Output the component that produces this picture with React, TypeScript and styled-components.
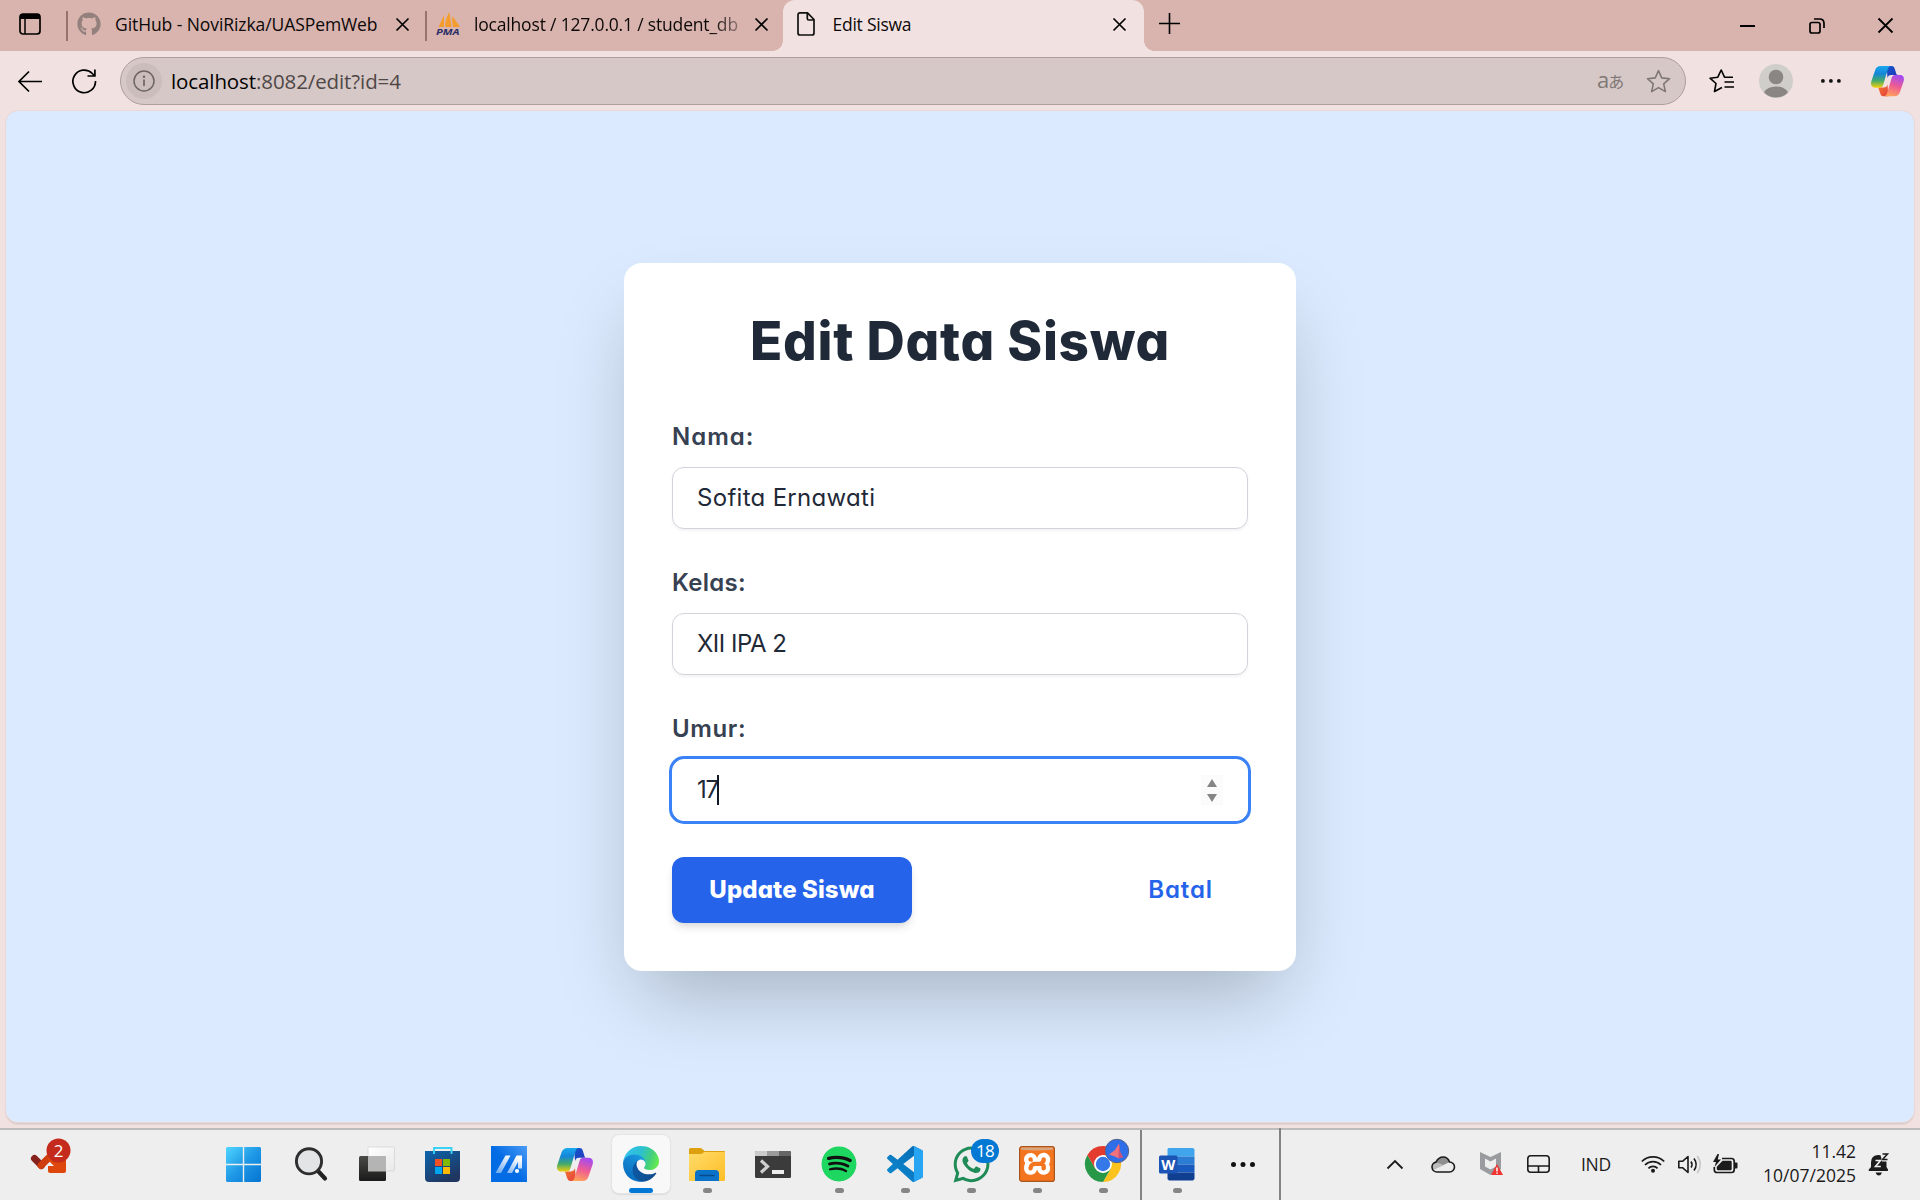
import React from "react";
import styled, { createGlobalStyle, css } from "styled-components";
import { FaGithub, FaSpotify, FaWhatsapp } from "react-icons/fa";
import { SiXampp } from "react-icons/si";

const SYSTEM = `"Open Sans", "Noto Sans", sans-serif`;
const BRAND = `Inter, "Open Sans", sans-serif`;

const GlobalStyle = createGlobalStyle`
  *, *::before, *::after { box-sizing: border-box; }
  html, body { margin: 0; padding: 0; }
  body { width: 1920px; height: 1200px; overflow: hidden; background: #f1e2e0; font-family: ${SYSTEM}; }
  svg { display: block; flex: none; overflow: visible; }
`;

/* ---------- window ---------- */
const Screen = styled.div`
  width: 1920px; height: 1200px; display: flex; flex-direction: column; background: #f1e2e1;
`;
const TabStrip = styled.div`
  height: 51px; flex: none; display: flex; align-items: stretch; background: #d9b4ae; color: #0c0808;
`;
const TabActions = styled.div`
  width: 66px; display: flex; align-items: center; padding: 0 0 3px 19px;
`;
const TabDivider = styled.div`
  width: 2px; height: 30px; margin-top: 11px; background: #97736f;
`;
const Tab = styled.div<{ $width: number; $pad: number; $end: number; $active?: boolean }>`
  width: ${(p) => p.$width}px; flex: none; display: flex; align-items: center;
  padding: 0 ${(p) => p.$end}px 3px ${(p) => p.$pad}px;
  ${(p) => p.$active && css`
    position: relative; background: #f1e2e1; border-radius: 12px 12px 0 0;
    &::before, &::after { content: ""; position: absolute; bottom: 0; width: 10px; height: 10px; }
    &::before { left: -10px; background: radial-gradient(circle at 0 0, transparent 9.5px, #f1e2e1 10px); }
    &::after { right: -10px; background: radial-gradient(circle at 100% 0, transparent 9.5px, #f1e2e1 10px); }
  `}
`;
const TabTitle = styled.span<{ $ls: number; $fade?: boolean }>`
  flex: 1; min-width: 0; margin-right: 13px; white-space: nowrap;
  font-size: 17.5px; line-height: 24px; letter-spacing: ${(p) => p.$ls}px; padding-bottom: 1px;
  ${(p) => p.$fade && css`mask-image: linear-gradient(to right, #000 89%, transparent 104%);`}
`;
const FavIcon = styled.span<{ $gap: number }>`
  display: flex; width: 24px; flex: none; margin-right: ${(p) => p.$gap}px;
`;
const NewTab = styled.div`
  width: 51px; display: flex; align-items: center; justify-content: center; padding-bottom: 4px;
`;
const Grow = styled.div`flex: 1;`;
const WindowButton = styled.div`
  width: 69px; display: flex; align-items: center; justify-content: center;
`;

const Toolbar = styled.div`
  height: 60px; flex: none; display: flex; align-items: center; padding-right: 5px;
`;
const ToolSlot = styled.div<{ $width: number; $shift?: number }>`
  width: ${(p) => p.$width}px; flex: none; display: flex; align-items: center; justify-content: center;
  padding-right: ${(p) => p.$shift ?? 0}px;
`;
const AddressBar = styled.div`
  width: 1566px; height: 48px; flex: none; margin-right: 9px; display: flex; align-items: center;
  padding: 0 14px 0 5px; border: 1.5px solid #ad9f9e; border-radius: 24px; background: #d6c8c7;
`;
const SiteInfo = styled.div`
  width: 36px; height: 36px; border-radius: 50%; background: #cbbdbc; display: flex; align-items: center; justify-content: center;
`;
const Url = styled.div`
  margin-left: 9px; flex: 1; font-size: 20.5px; line-height: 30px; letter-spacing: -0.1px; color: #4f4746; padding-bottom: 1px;
  b { font-weight: 400; color: #000; }
`;
const Translate = styled.div`
  width: 30px; margin-right: 19px; display: flex; align-items: baseline; color: #7f7776;
  font-size: 22px; line-height: 28px; padding-bottom: 3px;
  span { font-family: "Noto Sans CJK JP", sans-serif; font-size: 16px; margin-left: -1px; }
`;

/* ---------- page ---------- */
const Viewport = styled.main`
  width: 1908px; height: 1011px; margin: 0 6px 6px; flex: none; border-radius: 12px; background: #dbeafe;
  box-shadow: 0 0 0 1px #ecd8d4, 0 2px 2px #cfbfbf; display: flex; align-items: center; justify-content: center; overflow: hidden;
`;
const Card = styled.form`
  width: 672px; height: 708px; margin: 1px 0 0; padding: 42px 48px 48px; background: #fff; border-radius: 18px;
  box-shadow: 0 37.5px 75px -18px rgba(0, 0, 0, 0.25); font-family: ${BRAND}; font-feature-settings: "cv11";
  display: flex; flex-direction: column;
`;
const Title = styled.h1`
  margin: 0 0 42px; height: 72px; line-height: 72px; font-size: 53px; font-weight: 800; color: #1f2937;
  text-align: center; white-space: nowrap; letter-spacing: 0.7px;
`;
const Field = styled.label`
  display: flex; flex-direction: column; margin-bottom: 36px;
`;
const Caption = styled.span<{ $ls: number }>`
  height: 36px; line-height: 36px; margin-bottom: 12px; font-size: 24px; font-weight: 600; color: #374151;
  letter-spacing: ${(p) => p.$ls}px;
`;
const Control = styled.span<{ $focus?: boolean }>`
  height: 62px; display: flex; align-items: center; padding: 0 24px; border-radius: 12px; background: #fff;
  border: 1.5px solid ${(p) => (p.$focus ? "#fff" : "#d1d5db")};
  box-shadow: ${(p) => (p.$focus ? "0 0 0 3px #3b82f6" : "0 1.5px 3px rgba(0, 0, 0, 0.05)")};
  color: #1f2937;
`;
const Value = styled.span<{ $ls: number }>`
  font-size: 24px; line-height: 36px; letter-spacing: ${(p) => p.$ls}px;
`;
const Caret = styled.span`width: 2px; height: 30px; margin-left: -1px; background: #111827;`;
const Spinner = styled.span`
  width: 22px; height: 30px; margin-left: auto; background: #fbfbfb; display: flex; flex-direction: column;
  align-items: center; justify-content: center; gap: 7px;
`;
const Actions = styled.div`
  display: flex; align-items: center; justify-content: space-between;
`;
const Submit = styled.button`
  width: 240px; height: 66px; padding: 0; border: 0; border-radius: 12px; background: #2563eb; color: #fff;
  font: 800 24px/36px ${BRAND}; font-feature-settings: "cv11"; letter-spacing: 0.1px; white-space: nowrap;
  box-shadow: 0 6px 9px -1.5px rgba(0, 0, 0, 0.1), 0 3px 6px -3px rgba(0, 0, 0, 0.1);
`;
const Cancel = styled.a`
  margin-right: 35px; font-size: 24px; font-weight: 600; line-height: 36px; color: #2563eb; letter-spacing: 0.9px;
`;

/* ---------- taskbar ---------- */
const Taskbar = styled.footer`
  height: 72px; flex: none; display: flex; background: #eeeeee; border-top: 2px solid #bcbcbc; color: #1b1b1b;
`;
const Widgets = styled.div`
  width: 210px; flex: none; padding: 10px 0 0 30px;
`;
const AppSlot = styled.div<{ $width?: number }>`
  width: ${(p) => p.$width ?? 66}px; height: 70px; flex: none; display: flex; flex-direction: column; align-items: center;
`;
const AppTile = styled.div<{ $active?: boolean }>`
  width: 58px; height: 58px; margin-top: 5px; border-radius: 7px; display: flex; align-items: center; justify-content: center;
  position: relative;
  ${(p) => p.$active && css`background: #f8f8f8; box-shadow: 0 0 0 1px #e4e4e4, 0 1px 1px 1px #dcdcdc;`}
`;
const Running = styled.i<{ $active?: boolean }>`
  width: ${(p) => (p.$active ? 24 : 9)}px; height: 5px; margin-top: -5px; border-radius: 3px; z-index: 1;
  background: ${(p) => (p.$active ? "#0078d7" : "#858585")};
`;
const Badge = styled.span`
  position: absolute; top: 4px; right: 1px; width: 28px; height: 24px; border-radius: 12px; background: #0078d4; color: #fff;
  font-size: 17px; line-height: 24px; text-align: center; letter-spacing: -0.7px;
`;
const BarDivider = styled.div<{ $up?: boolean; $before?: number }>`
  width: 2px; flex: none; margin: ${(p) => (p.$up ? -2 : 0)}px 0 0 ${(p) => p.$before ?? 0}px; background: #838383;
`;
const Tray = styled.div`
  display: flex; padding-right: 18px; height: 68px;
`;
const TraySlot = styled.div<{ $width: number }>`
  width: ${(p) => p.$width}px; flex: none; display: flex; align-items: center; justify-content: center;
`;
const Lang = styled.span`font-size: 17.5px; line-height: 24px; letter-spacing: -0.2px;`;
const Clock = styled.div`
  width: 109px; flex: none; display: flex; flex-direction: column; align-items: flex-end; padding-top: 9px;
  font-size: 17.5px; line-height: 24px; white-space: nowrap;
`;

/* ---------- icons ---------- */
const Cross = ({ size = 13, w = 1.7 }: { size?: number; w?: number }) => (
  <svg width={size} height={size} viewBox={`0 0 ${size} ${size}`} stroke="#000" strokeWidth={w} fill="none">
    <path d={`M.5.5 ${size - 0.5} ${size - 0.5}M${size - 0.5}.5.5 ${size - 0.5}`} />
  </svg>
);

const CopilotIcon = ({ size, id }: { size: number; id: string }) => (
  <svg width={size} height={(size * 33) / 36} viewBox="0 0 36 33">
    <defs>
      <linearGradient id={`${id}a`} x1="0" y1="0" x2="0" y2="1">
        <stop offset="0" stopColor="#1aa9ee" /><stop offset=".35" stopColor="#1486d8" />
        <stop offset=".68" stopColor="#45ab6a" /><stop offset="1" stopColor="#f5cf0c" />
      </linearGradient>
      <linearGradient id={`${id}b`} x1=".6" y1="0" x2=".3" y2="1">
        <stop offset="0" stopColor="#a44bf0" /><stop offset=".5" stopColor="#ef5c92" /><stop offset="1" stopColor="#ffa45a" />
      </linearGradient>
      <linearGradient id={`${id}c`} x1="0" y1="0" x2="1" y2="1">
        <stop offset="0" stopColor="#1657c9" /><stop offset="1" stopColor="#2334bd" />
      </linearGradient>
      <linearGradient id={`${id}d`} x1="0" y1="0" x2="1" y2="1">
        <stop offset="0" stopColor="#f3792c" /><stop offset="1" stopColor="#e5413f" />
      </linearGradient>
    </defs>
    <path d="M17 0h5.500c2 0 2.900 1.200 3.500 3.200l1.600 5.300c.3 1 .8 1.200 2 1.200h-7.800c-2.100 0-3.100 1.200-3.800 3.300z" fill={`url(#${id}c)`} />
    <path d="M19 33h-5.500c-2 0-2.900-1.200-3.500-3.200l-1.600-5c-.3-1-.8-1.400-2-1.400h7.800c2.100 0 3.100-1.200 3.800-3.300z" fill={`url(#${id}d)`} />
    <path d="M10.500 0H22c-1.900 0-2.900 1.300-3.500 3.300l-5 16.700c-.7 2.300-1.700 3.600-4 3.600H4.500C.6 23.600-.6 20.600.3 17L4.500 4.500C5.500 1.500 7.500 0 10.500 0z" fill={`url(#${id}a)`} />
    <path d="M25.500 33H14c1.900 0 2.900-1.300 3.500-3.300l5-16.700c.7-2.300 1.700-3.300 4-3.300h5c3.900 0 5.100 3 4.200 6.600l-4.200 12.200c-1 3-3 4.500-6 4.500z" fill={`url(#${id}b)`} />
  </svg>
);

const StarPath = "M12 1.600l3.100 6.900 7.500.8-5.600 5 1.600 7.400L12 17.900l-6.600 3.800L7 14.300l-5.600-5 7.500-.8z";

const EdgeIcon = () => (
  <svg width="36" height="36" viewBox="0 0 256 256">
    <defs>
      <linearGradient id="e1" x1="0" x2="1" y1=".5" y2=".6"><stop stopColor="#0c59a4" /><stop offset="1" stopColor="#114a8b" /></linearGradient>
      <linearGradient id="e2" x1=".7" x2=".2" y1="0" y2="1"><stop stopColor="#1b9de2" /><stop offset=".4" stopColor="#1384d0" /><stop offset="1" stopColor="#0668bb" /></linearGradient>
      <linearGradient id="e3" x1="0" x2="1" y1=".35" y2=".6"><stop stopColor="#35c1f1" /><stop offset=".45" stopColor="#2cc0d0" /><stop offset=".75" stopColor="#44cf7d" /><stop offset="1" stopColor="#66eb4e" /></linearGradient>
    </defs>
    <g transform="translate(-4.600 -4.900)">
      <path fill="url(#e1)" d="M235.700 195.500a93.700 93.700 0 0 1-10.600 4.700 101.900 101.900 0 0 1-35.900 6.400c-47.300 0-88.500-32.500-88.500-74.300A31.500 31.500 0 0 1 117.100 105c-42.800 1.800-53.800 46.400-53.800 72.500 0 73.900 68.100 81.400 82.800 81.400 7.900 0 19.800-2.300 27-4.600l1.300-.4A128.300 128.300 0 0 0 241 201.100a4 4 0 0 0-5.300-5.600z" />
      <path fill="url(#e2)" d="M110.300 246.300A79.200 79.200 0 0 1 87.600 225a80.700 80.700 0 0 1 29.500-120c3.100-1.500 8.500-4.100 15.600-4a32.400 32.400 0 0 1 25.700 13 31.900 31.900 0 0 1 6.300 18.700c0-.2 24.500-79.600-80-79.600-43.900 0-80 41.600-80 78.200a130.200 130.200 0 0 0 12.100 56 128 128 0 0 0 156.400 67.100 75.600 75.600 0 0 1-62.800-8z" />
      <path fill="url(#e3)" d="M156.900 153.800c-.8 1-3.300 2.500-3.300 5.600 0 2.600 1.700 5.100 4.700 7.300 14.400 10 41.500 8.600 41.600 8.600a59.600 59.600 0 0 0 30.300-8.300A61.400 61.400 0 0 0 260.600 114c.3-22.400-8-37.300-11.300-43.900C228.100 28.800 182.300 4.900 132.600 4.900a128 128 0 0 0-128 126.200c.5-36.500 36.800-66 80-66 3.500 0 23.500.3 42 10 16.300 8.600 24.900 19 30.900 29.300 6.200 10.600 7.200 24.100 7.200 29.500s-2.700 13.300-7.800 19.900z" />
    </g>
  </svg>
);

const VsCodeIcon = () => (
  <svg width="36" height="36" viewBox="0 0 24 24">
    <defs>
      <clipPath id="vsr"><rect x="18" y="0" width="6" height="24" /></clipPath>
      <linearGradient id="vsg" x1="0" y1="1" x2="1" y2="0"><stop offset="0" stopColor="#0a8ad0" /><stop offset=".45" stopColor="#0b7cc4" /><stop offset="1" stopColor="#0068b0" /></linearGradient>
    </defs>
    {["url(#vsg)", "#27a5f3"].map((fill, i) => (
      <path key={i} fill={fill} clipPath={i ? "url(#vsr)" : undefined} d="M23.150 2.587L18.210.210a1.494 1.494 0 0 0-1.705.290l-9.460 8.630-4.120-3.128a.999.999 0 0 0-1.276.057L.327 7.261A1 1 0 0 0 .326 8.740L3.899 12 .326 15.260a1 1 0 0 0 .001 1.479L1.650 17.940a.999.999 0 0 0 1.276.057l4.120-3.128 9.460 8.630a1.492 1.492 0 0 0 1.704.290l4.942-2.377A1.500 1.500 0 0 0 24 20.060V3.939a1.500 1.500 0 0 0-.850-1.352zm-5.146 14.861L10.826 12l7.178-5.448v10.896z" />
    ))}
  </svg>
);

const StartIcon = () => (
  <svg width="35" height="35" viewBox="0 0 35 35">
    <defs><linearGradient id="win" gradientUnits="userSpaceOnUse" x1="0" y1="0" x2="35" y2="35"><stop stopColor="#4fd6ff" /><stop offset=".5" stopColor="#1f98e6" /><stop offset="1" stopColor="#0474d1" /></linearGradient></defs>
    <path fill="url(#win)" d="M1 0h15.800v16.800H0V1zM18.200 0H34l1 1v15.800H18.200zM0 18.200h16.800V35H1l-1-1zM18.200 18.200H35V34l-1 1H18.200z" />
  </svg>
);

const SearchIcon = () => (
  <svg width="32" height="34" viewBox="0 0 32 34">
    <path d="M23.500 24.500 30 31.500" stroke="#222" strokeWidth="4.200" strokeLinecap="round" />
    <circle cx="14" cy="14.300" r="12.600" fill="#e2e4e6" stroke="#2e2e2e" strokeWidth="2.900" />
  </svg>
);

const TaskViewIcon = () => (
  <svg width="36" height="34" viewBox="0 0 36 34">
    <defs>
      <linearGradient id="tv" x1="0" y1="0" x2="0" y2="1"><stop stopColor="#4a4a46" /><stop offset="1" stopColor="#1a1a1a" /></linearGradient>
      <linearGradient id="tw" x1="0" y1="0" x2="1" y2="1"><stop stopColor="#fff" /><stop offset="1" stopColor="#e8e8e8" /></linearGradient>
    </defs>
    <rect x="9" y="0" width="26.500" height="24" rx="1" fill="url(#tw)" stroke="#d4d4d4" strokeWidth=".8" />
    <rect x="0" y="9" width="27" height="25" rx="1.500" fill="url(#tv)" />
    <path d="M9 9h18v15.500H9z" fill="#b4b4b4" />
  </svg>
);

const StoreIcon = () => (
  <svg width="35" height="35" viewBox="0 0 35 35">
    <defs><linearGradient id="st" x1="0" y1="0" x2=".6" y2="1"><stop stopColor="#0c65ae" /><stop offset="1" stopColor="#20355f" /></linearGradient></defs>
    <path d="M0 4h35v27a4 4 0 0 1-4 4H4a4 4 0 0 1-4-4z" fill="url(#st)" />
    <path d="M9 7V1h17.500v6" fill="none" stroke="#3bd0f5" strokeWidth="1.900" />
    <path fill="#f25022" d="M10 12h7v7h-7z" /><path fill="#7fba00" d="M18 12h7v7h-7z" />
    <path fill="#00a4ef" d="M10 20h7v7h-7z" /><path fill="#ffb900" d="M18 20h7v7h-7z" />
  </svg>
);

const AsusIcon = () => (
  <svg width="36" height="36" viewBox="0 0 36 36">
    <defs>
      <linearGradient id="as" x1=".45" y1=".5" x2="1" y2="0"><stop stopColor="#036be4" /><stop offset="1" stopColor="#4b9bf5" /></linearGradient>
      <linearGradient id="as2" x1="0" y1="1" x2=".6" y2="0"><stop stopColor="#6aa7f0" /><stop offset="1" stopColor="#fff" /></linearGradient>
    </defs>
    <path fill="url(#as)" d="M0 0h36v36H0z" />
    <path fill="url(#as2)" d="M14.500 9.500h5L10 27H4.500zM25.500 9.500h5.500v13h-4V16l-6 11h-5z" />
    <circle cx="26" cy="25" r="2.100" fill="#fff" />
  </svg>
);

const FolderIcon = () => (
  <svg width="36" height="33" viewBox="0 0 36 33">
    <defs><linearGradient id="fo" x1="0" y1="0" x2="1" y2="1"><stop stopColor="#ffdc6a" /><stop offset="1" stopColor="#fdbd26" /></linearGradient></defs>
    <path d="M0 8V1.500Q0 0 1.500 0H11q1.500 0 2.500 1.200L15.500 3H35q1 0 1 1v5z" fill="#dda10f" />
    <path d="M0 6h11.500q1.500 0 2.500-1l1-1h21v28q0 1-1 1H1q-1 0-1-1z" fill="url(#fo)" />
    <path d="M6 33v-7.500Q6 22 9.500 22h17q3.500 0 3.500 3.500V33z" fill="#0b72c9" />
    <path d="M11 27.500h14" stroke="#084b8d" strokeWidth="1.600" strokeLinecap="round" />
  </svg>
);

const TerminalIcon = () => (
  <svg width="36" height="27" viewBox="0 0 36 27">
    <rect width="36" height="27" rx="1.500" fill="#3b3b3b" />
    <path d="M1 0h11v5H0V1z" fill="#cbcbcb" /><path d="M12 0h12v5H12z" fill="#9b9b9b" /><path d="M24 0h11l1 1v4H24z" fill="#666" />
    <path d="m6 9.500 6.500 6L6 21.500" fill="none" stroke="#cfcfcf" strokeWidth="3.200" /><path d="M17 19h12v4H17z" fill="#eee" />
  </svg>
);

const SpotifyIcon = () => (
  <svg width="36" height="36" viewBox="0 0 36 36">
    <circle cx="18" cy="18" r="17" fill="#111" />
    <FaSpotify size={36} color="#1ed760" />
  </svg>
);

const XamppIcon = () => (
  <svg width="36" height="36" viewBox="0 0 36 36">
    <rect x="4" y="4" width="28" height="28" fill="#fff" />
    <SiXampp size={36} color="#f4751f" />
    <rect x=".6" y=".6" width="34.800" height="34.800" rx="2.500" fill="none" stroke="#a9561c" strokeWidth="1.200" />
    <path d="M2 1.500h32v2.300q-16 1.500-32 0z" fill="#d9a57f" />
  </svg>
);

const ChromeIcon = () => (
  <svg width="36" height="36" viewBox="0 0 36 36">
    <path d="M18 9h15.600A18 18 0 0 1 18 36l7.800-13.500z" fill="#fcc31e" />
    <path d="M2.400 9A18 18 0 0 0 18 36l7.800-13.500-7.800 4.500-7.800-4.500z" fill="#279847" />
    <path d="M2.400 9A18 18 0 0 1 33.600 9H18l-7.800 13.500z" fill="#e33b2e" />
    <circle cx="18" cy="18" r="9" fill="#fff" /><circle cx="18" cy="18" r="7.200" fill="#3578e8" />
    <circle cx="32" cy="5" r="11.700" fill="#2f6ee9" stroke="#55628c" strokeWidth="1" />
    <path d="M24 8.500 30 4l4-6.500 1.300 9L38 11l-4.500 1.500L31 11z" fill="#f0727d" /><path d="m34-2.500 1.300 9L38 11l-4.500 1.500z" fill="#c8507a" />
  </svg>
);

const WordIcon = () => (
  <svg width="36" height="33" viewBox="0 0 36 33">
    <path d="M9.500 0H34l1.500 1.500V8.500h-27V1z" fill="#41a5ee" /><path d="M8.500 8.500h27v8h-27z" fill="#2b7cd3" />
    <path d="M8.500 16.500h27v8h-27z" fill="#185abd" /><path d="M8.500 24.500h27v6.500L34 32.500H10L8.500 31z" fill="#103f91" />
    <rect x="0" y="7.500" width="18.500" height="18" rx="1.500" fill="#1b54b4" />
    <text x="9.200" y="21.800" textAnchor="middle" fontFamily="Open Sans, sans-serif" fontWeight="700" fontSize="14.500" fill="#fff">W</text>
  </svg>
);

const Dots = ({ gap, r }: { gap: number; r: number }) => (
  <svg width={gap * 2 + r * 2} height={r * 2} fill="#111">
    {[0, 1, 2].map((i) => <circle key={i} cx={r + i * gap} cy={r} r={r} />)}
  </svg>
);

const WidgetIcon = () => (
  <svg width="42" height="40" viewBox="0 0 42 40">
    <path d="m4.500 18.500 7 7" stroke="#86201a" strokeWidth="7" strokeLinecap="round" />
    <path d="m11 25.500 9-9" stroke="#cf3d0c" strokeWidth="7" strokeLinecap="round" />
    <path d="M17 13h19v18q0 2-2 2H20q-2 0-2-2v-5h6l-6-6z" fill="#de470b" />
    <circle cx="28.500" cy="10.500" r="12" fill="#c42b1c" />
    <text x="28.500" y="16.500" textAnchor="middle" fontFamily="Open Sans, sans-serif" fontSize="17" fill="#fff">2</text>
  </svg>
);

const CloudIcon = () => (
  <svg width="24" height="17" viewBox="0 0 24 17">
    <path d="M6 16a5 5 0 0 1-1-9.900Q7.500 1 12.200 1q4.600 0 6.300 5A5 5 0 0 1 18.500 16z" fill="#ececec" />
    <path d="M2.500 9Q3.500 6.500 5 6.100 7.500 1 12.200 1q4.600 0 6.300 5l-6 3L1.500 14q-.8-3 1-5z" fill="#8e8e8e" />
    <path d="M12.500 9 2 14 1 11q1-4 5-4.500z" fill="#bdbdbd" />
    <path d="M6 16a5 5 0 0 1-1-9.900Q7.500 1 12.200 1q4.600 0 6.300 5A5 5 0 0 1 18.500 16z" fill="none" stroke="#1b1b1b" strokeWidth="1.600" />
  </svg>
);

const ShieldIcon = () => (
  <svg width="23" height="24" viewBox="0 0 23 24">
    <path d="m0 0 10.500 5L21 0v17l-10.500 6L0 17zM5 6.500v8l5.500 3 5.500-3v-8l-5.500 3z" fill="#999b9e" fillRule="evenodd" />
    <path d="M17 12 23 23H11z" fill="#f0332f" /><path d="M17 15.500v4M17 20.500v1.300" stroke="#fff" strokeWidth="1.500" />
  </svg>
);

const TouchpadIcon = () => (
  <svg width="23" height="18" viewBox="0 0 23 18" fill="none" stroke="#1b1b1b" strokeWidth="1.600">
    <rect x=".8" y=".8" width="21.400" height="16.400" rx="3" /><path d="M1 11h21M11.500 11v6" />
  </svg>
);

const WifiIcon = () => (
  <svg width="24" height="18" viewBox="0 0 24 18" fill="none" stroke="#1b1b1b" strokeWidth="1.700">
    <path d="M.8 6.500a15.800 15.800 0 0 1 22.400 0M4 10a11.300 11.300 0 0 1 16 0M7.400 13.300a6.500 6.500 0 0 1 9.200 0" />
    <circle cx="12" cy="15.800" r="2" fill="#1b1b1b" stroke="none" />
  </svg>
);

const VolumeIcon = () => (
  <svg width="24" height="19" viewBox="0 0 24 19" fill="none" stroke="#1b1b1b" strokeWidth="1.600">
    <path d="M.8 6.300h3.700L10 1.500v16l-5.500-4.800H.8z" strokeLinejoin="round" />
    <path d="M13 6.500q2 3 0 6M16 3.500q4.300 6 0 12" /><path d="M19.300 1q6 8.500 0 17" stroke="#c4c4c4" />
  </svg>
);

const BatteryIcon = () => (
  <svg width="25" height="20" viewBox="0 0 25 20">
    <path d="M9 4.500h9.500q2.700 0 2.700 2.700v8.600q0 2.700-2.700 2.700H4q-2.700 0-2.700-2.700V13" fill="none" stroke="#1b1b1b" strokeWidth="1.700" />
    <path d="M9.500 6.800h8q1.200 0 1.200 1.200v7q0 1.200-1.200 1.200H5q-1.200 0-1.200-1.200v-2.200z" fill="#1b1b1b" /><path d="M22 8.500h1.500q1 0 1 1v4q0 1-1 1H22z" fill="#1b1b1b" />
    <path d="M4.500 0 0 8h3l-1.500 5L8 5.500H4.800L6 0z" fill="#1b1b1b" />
  </svg>
);

const BellIcon = () => (
  <svg width="22" height="23" viewBox="0 0 22 23">
    <path d="M3 14V9.500Q3 2 10.500 2q8 0 8 7.500V14l1.500 2.500q.5 1.500-1 1.500H1.500Q0 18 .8 16.500zM7.500 19.500h6.500q-1 3-3.200 3t-3.300-3z" fill="#1b1b1b" />
    <path d="M12-.5h8.500v9H14z" fill="#eee" />
    <path d="M14.500 1h5l-5 5.500h5" fill="none" stroke="#1b1b1b" strokeWidth="1.500" />
    <path d="M7.500 7.500h5l-5 6h5.300" fill="none" stroke="#eee" strokeWidth="1.600" />
  </svg>
);

const apps: { id: string; icon: React.ReactNode; width?: number; running?: boolean; active?: boolean }[] = [
  { id: "start", icon: <StartIcon />, width: 67 },
  { id: "search", icon: <SearchIcon />, width: 67 },
  { id: "taskview", icon: <TaskViewIcon /> },
  { id: "store", icon: <StoreIcon />, width: 65 },
  { id: "asus", icon: <AsusIcon />, width: 67 },
  { id: "copilot", icon: <CopilotIcon size={36} id="cpt" /> },
  { id: "edge", icon: <EdgeIcon />, running: true, active: true },
  { id: "files", icon: <FolderIcon />, running: true },
  { id: "terminal", icon: <TerminalIcon /> },
  { id: "spotify", icon: <SpotifyIcon />, running: true },
  { id: "vscode", icon: <VsCodeIcon />, running: true },
  { id: "whatsapp", icon: <><FaWhatsapp size={41} color="#1f8b57" /><Badge>18</Badge></>, running: true },
  { id: "xampp", icon: <XamppIcon />, running: true },
  { id: "chrome", icon: <ChromeIcon />, running: true },
];

export default function App() {
  return (
    <Screen>
      <GlobalStyle />
      <TabStrip>
        <TabActions>
          <svg width="22" height="22" viewBox="0 0 22 22"><rect x="1" y="1" width="20" height="20" rx="3" fill="none" stroke="#000" strokeWidth="1.700" /><path d="M1 6V3.500Q1 1 3.500 1h15Q21 1 21 3.500V6z" /><path d="M6 6v15" stroke="#000" strokeWidth="1.500" /></svg>
        </TabActions>
        <TabDivider />
        <Tab $width={357} $pad={9} $end={16}>
          <FavIcon $gap={14}><FaGithub size={24} color="#94807d" /></FavIcon>
          <TabTitle $ls={-0.08}>GitHub - NoviRizka/UASPemWeb</TabTitle><Cross />
        </Tab>
        <TabDivider />
        <Tab $width={356} $pad={9} $end={15}>
          <FavIcon $gap={14}>
            <svg width="24" height="24" viewBox="0 0 24 24">
              <path d="M8 3 2.500 15H8zM13.500 0Q8 9 9.500 15h6zM16.500 4q-1 5 .5 11h7z" fill="#f59c2e" />
              <text x="0" y="22.800" textLength="23.500" lengthAdjust="spacingAndGlyphs" fontFamily="Open Sans, sans-serif" fontSize="9.500" fontWeight="700" fontStyle="italic" fill="#2b2d66">PMA</text>
            </svg>
          </FavIcon>
          <TabTitle $ls={-0.18} $fade>localhost / 127.0.0.1 / student_db</TabTitle><Cross />
        </Tab>
        <Tab $width={361} $pad={14} $end={18} $active>
          <FavIcon $gap={11.5}><svg width="18" height="24" viewBox="0 0 18 24" fill="none" stroke="#111" strokeWidth="1.700"><path d="M3 .9h7.500L17 7.500V21q0 2-2 2H3q-2 0-2-2V3Q1 .9 3 .9zM10.300 1v5.500q0 1.500 1.500 1.500H17" /></svg></FavIcon>
          <TabTitle $ls={-0.25}>Edit Siswa</TabTitle><Cross />
        </Tab>
        <NewTab><svg width="21" height="21" stroke="#000" strokeWidth="1.600"><path d="M10.500 0v21M0 10.500h21" /></svg></NewTab>
        <Grow />
        <WindowButton><svg width="15" height="2"><rect width="15" height="2" /></svg></WindowButton>
        <WindowButton><svg width="16" height="16" fill="none" stroke="#000" strokeWidth="1.700"><rect x="1" y="4.500" width="10" height="10.500" rx="2" /><path d="M5 1h5.500q4.500 0 4.500 4.500V10" /></svg></WindowButton>
        <WindowButton><Cross size={15} w={1.8} /></WindowButton>
      </TabStrip>

      <Toolbar>
        <ToolSlot $width={60}><svg width="24" height="21" fill="none" stroke="#000" strokeWidth="1.700"><path d="M24 10.500H1M11 .5l-10 10 10 10" /></svg></ToolSlot>
        <ToolSlot $width={60} $shift={12}><svg width="25" height="24" viewBox="0 0 25 24" fill="none" stroke="#000" strokeWidth="1.700"><path d="M23.500 12A11.300 11.300 0 1 1 20.300 4.500L22.800 7M22.900.5V7H15.500" /></svg></ToolSlot>
        <AddressBar>
          <SiteInfo><svg width="22" height="22" fill="none" stroke="#6d6564" strokeWidth="1.500"><circle cx="11" cy="11" r="10" /><path d="M11 9.500V16" strokeWidth="1.700" /><circle cx="11" cy="6.800" r=".5" /></svg></SiteInfo>
          <Url><b>localhost</b>:8082/edit?id=4</Url>
          <Translate>a<span>あ</span></Translate>
          <svg width="25" height="25" viewBox="0 0 24 24" fill="none" stroke="#7f7776" strokeWidth="1.500" strokeLinejoin="round"><path d={StarPath} /></svg>
        </AddressBar>
        <ToolSlot $width={54} $shift={1}><svg width="25" height="24" viewBox="0 0 25 24" fill="none" stroke="#000" strokeWidth="1.600" strokeLinejoin="round"><path d="M13 18.500 5.500 22.500 7 14.500 1 9.200l7.800-1L12.200 1l3.300 7.200H24M15.500 13H25M15.500 18H25" /></svg></ToolSlot>
        <ToolSlot $width={54}><svg width="34" height="34"><circle cx="17" cy="17" r="17" fill="#d0ceca" /><circle cx="17" cy="13" r="7.300" fill="#8a8683" /><path d="M5 28.500a12.500 8.500 0 0 1 24 0A17 17 0 0 1 5 28.500z" fill="#8a8683" /></svg></ToolSlot>
        <ToolSlot $width={55}><Dots gap={8} r={1.9} /></ToolSlot>
        <Grow />
        <ToolSlot $width={55} $shift={1}><CopilotIcon size={33} id="cpb" /></ToolSlot>
      </Toolbar>

      <Viewport>
        <Card>
          <Title>Edit Data Siswa</Title>
          <Field><Caption $ls={1}>Nama:</Caption><Control><Value $ls={0.3}>Sofita Ernawati</Value></Control></Field>
          <Field><Caption $ls={0.3}>Kelas:</Caption><Control><Value $ls={-0.5}>XII IPA 2</Value></Control></Field>
          <Field>
            <Caption $ls={0.6}>Umur:</Caption>
            <Control $focus>
              <Value $ls={-1.2}>17</Value><Caret />
              <Spinner>
                <svg width="10" height="8" fill="#858585"><path d="M5 0 10 8H0z" /></svg>
                <svg width="10" height="8" fill="#858585"><path d="M5 8 0 0h10z" /></svg>
              </Spinner>
            </Control>
          </Field>
          <Actions><Submit type="button">Update Siswa</Submit><Cancel>Batal</Cancel></Actions>
        </Card>
      </Viewport>

      <Taskbar>
        <Widgets><WidgetIcon /></Widgets>
        {apps.map((a) => (
          <AppSlot key={a.id} $width={a.width}>
            <AppTile $active={a.active}>{a.icon}</AppTile>
            {a.running && <Running $active={a.active} />}
          </AppSlot>
        ))}
        <BarDivider $before={4} />
        <AppSlot $width={70}><AppTile><WordIcon /></AppTile><Running /></AppSlot>
        <AppSlot $width={62}><AppTile><Dots gap={9.5} r={2.5} /></AppTile></AppSlot>
        <BarDivider $up $before={5} />
        <Grow />
        <Tray>
          <TraySlot $width={48}><svg width="16" height="9" fill="none" stroke="#1b1b1b" strokeWidth="1.800"><path d="m.5 8.500 7.500-7.500 7.500 7.500" /></svg></TraySlot>
          <TraySlot $width={48}><CloudIcon /></TraySlot>
          <TraySlot $width={48}><ShieldIcon /></TraySlot>
          <TraySlot $width={47}><TouchpadIcon /></TraySlot>
          <TraySlot $width={68}><Lang>IND</Lang></TraySlot>
          <TraySlot $width={46}><WifiIcon /></TraySlot>
          <TraySlot $width={27}><VolumeIcon /></TraySlot>
          <TraySlot $width={44}><BatteryIcon /></TraySlot>
          <Clock><span>11.42</span><span>10/07/2025</span></Clock>
          <TraySlot $width={46}><BellIcon /></TraySlot>
        </Tray>
      </Taskbar>
    </Screen>
  );
}
